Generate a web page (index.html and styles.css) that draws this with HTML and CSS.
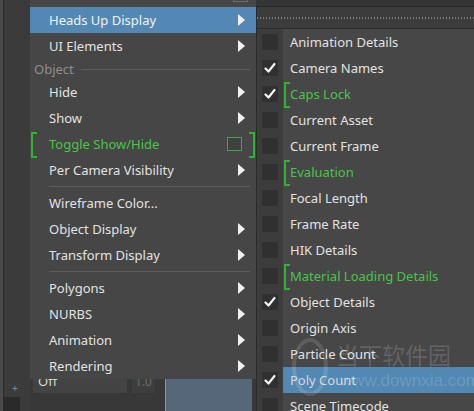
FILE: index.html
```html
<!DOCTYPE html>
<html>
<head>
<meta charset="utf-8">
<link rel="stylesheet" href="styles.css">
</head>
<body>
<div class="scene">
  <div class="bg">
    <div class="strip">
      <span class="plus">+</span>
      <span class="darksq"></span>
    </div>
    <div class="mid">
      <div class="bottomrow">
        <div class="field">Off</div>
        <div class="numbox">1.0</div>
        <div class="viewport"></div>
      </div>
    </div>
    <div class="right">
      <div class="topbar">
        <div class="titlestrip"></div>
        <div class="dotrow"><span class="dots"></span></div>
      </div>
    </div>
  </div>

  <div class="menu main-menu">
    <div class="mi partial"><span class="box gray"></span></div>
    <div class="mi hl"><span class="lbl">Heads Up Display</span><span class="arrow"></span></div>
    <div class="mi"><span class="lbl">UI Elements</span><span class="arrow"></span></div>
    <div class="section"><span class="sec-lbl">Object</span><span class="sec-line"></span></div>
    <div class="mi"><span class="lbl">Hide</span><span class="arrow"></span></div>
    <div class="mi"><span class="lbl">Show</span><span class="arrow"></span></div>
    <div class="mi green"><span class="brk brk-l"></span><span class="lbl">Toggle Show/Hide</span><span class="box greenbox"></span><span class="brk brk-r"></span></div>
    <div class="mi"><span class="lbl">Per Camera Visibility</span><span class="arrow"></span></div>
    <div class="sep"></div>
    <div class="mi"><span class="lbl">Wireframe Color...</span></div>
    <div class="mi"><span class="lbl">Object Display</span><span class="arrow"></span></div>
    <div class="mi"><span class="lbl">Transform Display</span><span class="arrow"></span></div>
    <div class="sep"></div>
    <div class="mi"><span class="lbl">Polygons</span><span class="arrow"></span></div>
    <div class="mi"><span class="lbl">NURBS</span><span class="arrow"></span></div>
    <div class="mi"><span class="lbl">Animation</span><span class="arrow"></span></div>
    <div class="mi"><span class="lbl">Rendering</span><span class="arrow"></span></div>
  </div>

  <div class="menu sub-menu">
    <div class="si"><span class="cbcol"><span class="cb"></span></span><span class="slbl">Animation Details</span></div>
    <div class="si"><span class="cbcol"><span class="cb"><svg viewBox="0 0 16 16"><polyline points="3.5,8.5 6.5,11.5 12.5,4"/></svg></span></span><span class="slbl">Camera Names</span></div>
    <div class="si green"><span class="cbcol"><span class="cb"><svg viewBox="0 0 16 16"><polyline points="3.5,8.5 6.5,11.5 12.5,4"/></svg></span></span><span class="slbl"><span class="brk brk-s"></span>Caps Lock</span></div>
    <div class="si"><span class="cbcol"><span class="cb"></span></span><span class="slbl">Current Asset</span></div>
    <div class="si"><span class="cbcol"><span class="cb"></span></span><span class="slbl">Current Frame</span></div>
    <div class="si green"><span class="cbcol"><span class="cb"></span></span><span class="slbl"><span class="brk brk-s"></span>Evaluation</span></div>
    <div class="si"><span class="cbcol"><span class="cb"></span></span><span class="slbl">Focal Length</span></div>
    <div class="si"><span class="cbcol"><span class="cb"></span></span><span class="slbl">Frame Rate</span></div>
    <div class="si"><span class="cbcol"><span class="cb"></span></span><span class="slbl">HIK Details</span></div>
    <div class="si green"><span class="cbcol"><span class="cb"></span></span><span class="slbl"><span class="brk brk-s"></span>Material Loading Details</span></div>
    <div class="si"><span class="cbcol"><span class="cb"><svg viewBox="0 0 16 16"><polyline points="3.5,8.5 6.5,11.5 12.5,4"/></svg></span></span><span class="slbl">Object Details</span></div>
    <div class="si"><span class="cbcol"><span class="cb"></span></span><span class="slbl">Origin Axis</span></div>
    <div class="si"><span class="cbcol"><span class="cb"></span></span><span class="slbl">Particle Count</span></div>
    <div class="si hl"><span class="cbcol"><span class="cb"><svg viewBox="0 0 16 16"><polyline points="3.5,8.5 6.5,11.5 12.5,4"/></svg></span></span><span class="slbl">Poly Count</span></div>
    <div class="si"><span class="cbcol"><span class="cb"></span></span><span class="slbl">Scene Timecode</span></div>
  </div>

  <div class="watermark">
    <span class="wm-ring"></span>
    <span class="wm-cn">当下软件园</span>
    <span class="wm-url">www.downxia.com</span>
  </div>
</div>
</body>
</html>
```

FILE: styles.css
```css
html, body {
  margin: 0;
  padding: 0;
}
body {
  width: 474px;
  height: 411px;
  overflow: hidden;
  background: #3a3a3a;
  font-family: "Noto Sans", "Open Sans", sans-serif;
  font-size: 13px;
}
.scene {
  position: relative;
  width: 474px;
  height: 411px;
  overflow: hidden;
}

/* ---------- background application ---------- */
.bg {
  display: flex;
  height: 411px;
}
.strip {
  width: 30px;
  flex: none;
  display: flex;
  flex-direction: column;
  justify-content: flex-end;
  align-items: flex-start;
  background: linear-gradient(to right, #4b4b4b 0 3px, #2b2b2b 3px 4px, #3b3b3b 4px);
}
.plus {
  color: #8a8a8a;
  font-size: 10px;
  line-height: 10px;
  margin: 0 0 4px 12px;
}
.darksq {
  width: 16px;
  height: 14px;
  margin-left: 4px;
  background: #2a2a2a;
}
.mid {
  width: 226px;
  flex: none;
  display: flex;
  flex-direction: column;
  justify-content: flex-end;
  background: #383838;
}
.bottomrow {
  height: 41px;
  display: flex;
  align-items: flex-start;
}
.field {
  width: 94px;
  height: 23px;
  margin-left: 3px;
  background: #434343;
  color: #d6d6d6;
  line-height: 23px;
  padding-left: 5px;
  box-sizing: border-box;
  font-size: 13px;
}
.numbox {
  width: 23px;
  height: 23px;
  margin-left: 5px;
  background: #3e3e3e;
  color: #6c6c6c;
  line-height: 23px;
  text-align: center;
  font-size: 12px;
}
.viewport {
  align-self: flex-end;
  width: 86px;
  height: 33px;
  margin-left: 10px;
  background: #56677a;
  border-left: 1px solid #8a96a2;
}
.right {
  flex: 1;
  background: #3a3a3a;
}
.topbar {
  height: 28px;
  display: flex;
  flex-direction: column;
}
.titlestrip {
  height: 6px;
  background: #353535;
  border-bottom: 1px solid #262626;
}
.dotrow {
  flex: 1;
  display: flex;
  align-items: center;
  background: #3c3c3c;
  border-left: 1px solid #2a2a2a;
}
.dots {
  flex: 1;
  height: 2px;
  margin-top: 1px;
  background-image: repeating-linear-gradient(to right, #7c7c7c 0 1px, transparent 1px 3px);
}

/* ---------- menus ---------- */
.menu {
  position: absolute;
  display: flex;
  flex-direction: column;
}
.main-menu {
  left: 30px;
  top: -19px;
  width: 226px;
  background: #464646;
}
.mi {
  position: relative;
  height: 26px;
  flex: none;
  display: flex;
  align-items: center;
  padding: 0 11px 0 19px;
  color: #e2e2e2;
  white-space: nowrap;
}
.mi .lbl {
  flex: 1;
}
.mi.hl {
  background: #5288b3;
  color: #f2f2f2;
}
.mi.partial {
  justify-content: flex-end;
  align-items: flex-end;
  padding-right: 8px;
}
.arrow {
  width: 0;
  height: 0;
  border-top: 6px solid transparent;
  border-bottom: 6px solid transparent;
  border-left: 7px solid #f0f0f0;
}
.box {
  width: 13px;
  height: 12px;
}
.box.gray {
  border: 1px solid #6e6e6e;
  margin-bottom: 5px;
}
.box.greenbox {
  border: 1px solid #3fa53f;
  background: #404040;
  margin-right: 3px;
}
.section {
  height: 20px;
  display: flex;
  align-items: center;
  padding: 0 6px 0 4px;
}
.sec-lbl {
  color: #8e8e8e;
}
.sec-line {
  flex: 1;
  height: 1px;
  margin-left: 7px;
  background: #5c5c5c;
}
.sep {
  height: 7px;
  display: flex;
  align-items: center;
  padding: 0 6px 0 19px;
}
.sep::before {
  content: "";
  flex: 1;
  height: 1px;
  background: #5c5c5c;
}
.mi.green {
  color: #46c646;
}
.brk {
  position: absolute;
  width: 4px;
  border: 2px solid #2fb42f;
}
.brk-l {
  left: 1px;
  top: 1px;
  bottom: -1px;
  border-right: none;
}
.brk-r {
  right: 1px;
  top: 1px;
  bottom: -1px;
  border-left: none;
}

/* submenu */
.sub-menu {
  left: 256px;
  top: 28px;
  width: 218px;
  border-left: 1px solid #2a2a2a;
  border-top: 1px solid #2c2c2c;
  background: #474747;
}
.si {
  height: 26px;
  flex: none;
  display: flex;
  align-items: stretch;
  color: #e2e2e2;
  white-space: nowrap;
}
.cbcol {
  width: 26px;
  flex: none;
  display: flex;
  align-items: center;
  background: #3c3c3c;
}
.cb {
  width: 16px;
  height: 16px;
  margin-left: 5px;
  background: #303030;
  display: flex;
}
.cb svg {
  width: 16px;
  height: 16px;
}
.cb polyline {
  fill: none;
  stroke: #f4f4f4;
  stroke-width: 2.2;
  stroke-linecap: round;
  stroke-linejoin: round;
}
.slbl {
  position: relative;
  flex: 1;
  display: flex;
  align-items: center;
  padding-left: 7px;
}
.si.green .slbl {
  color: #46c646;
}
.brk-s {
  left: 1px;
  top: 1px;
  bottom: -1px;
  border-right: none;
}
.si.hl .slbl {
  background: #5289b4;
  color: #d8d8d8;
}

/* watermark */
.watermark {
  position: absolute;
  left: 288px;
  top: 334px;
  width: 186px;
  height: 62px;
  pointer-events: none;
}
.wm-ring {
  position: absolute;
  left: 4px;
  top: 4px;
  width: 28px;
  height: 50px;
  border: 4px solid rgba(255, 255, 255, 0.13);
  border-radius: 50%;
}
.wm-cn {
  position: absolute;
  left: 48px;
  top: 6px;
  font-family: "Noto Sans CJK SC", sans-serif;
  font-size: 23px;
  line-height: 28px;
  color: rgba(255, 255, 255, 0.16);
}
.wm-url {
  position: absolute;
  left: 52px;
  top: 36px;
  font-family: "Liberation Sans", sans-serif;
  font-size: 17px;
  line-height: 22px;
  color: rgba(255, 255, 255, 0.16);
}
```
